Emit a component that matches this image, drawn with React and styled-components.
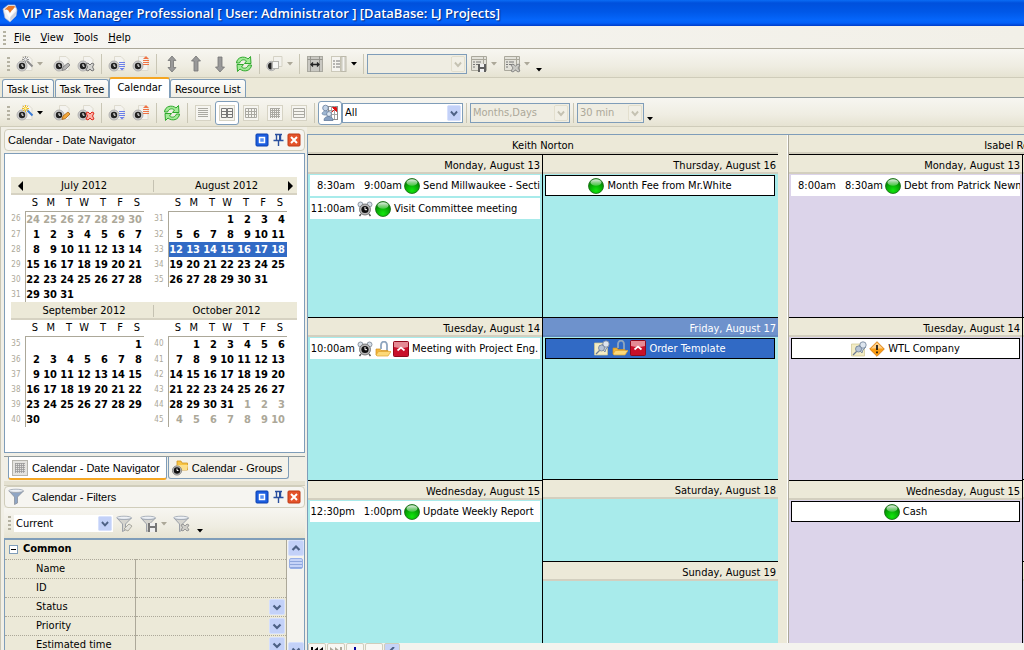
import React, { useState } from 'react';
import styled, { createGlobalStyle, css } from 'styled-components';

const GlobalStyle = createGlobalStyle`
  * { box-sizing: border-box; }

  body {
    margin: 0;
    background: #ece9d8;
    color: #000;
    font-family: "DejaVu Sans Condensed", "Noto Sans", sans-serif;
    font-size: 11px;
    line-height: 14px;
  }

  button, select, input { font: inherit; color: inherit; }
  svg { display: block; flex: none; }
`;

const Window = styled.div`
  display: flex;
  flex-direction: column;
  height: 100vh;
  overflow: hidden;
`;

const TitleBar = styled.header`
  display: flex;
  flex: none;
  align-items: center;
  gap: 4px;
  height: 26px;
  padding: 0 2px;
  background: linear-gradient(#0a6cf5 0, #0050dc 3px, #0058e8 12px, #0566fb 20px, #0360f8 23px, #003cc8 26px);
`;

const Title = styled.h1`
  margin: 0;
  color: #fff;
  font-family: "Open Sans", "Noto Sans", sans-serif;
  font-size: 13px;
  font-weight: 600;
  line-height: 18px;
  white-space: nowrap;
  text-shadow: 1px 1px 1px #0a2a80;
`;

const MenuBar = styled.nav`
  display: flex;
  flex: none;
  align-items: center;
  height: 23px;
  padding: 2px 0 0 1px;
  background: linear-gradient(90deg, #f6f5f1, #f2f0e8);
  border-bottom: 1px solid #aca899;
`;

const MenuItem = styled.button`
  padding: 0 5px;
  border: 0;
  background: none;
`;

const Toolbar = styled.div`
  display: flex;
  flex: none;
  align-items: center;
  height: 29px;
  padding: 2px 0 0 5px;
  background: linear-gradient(#f7f6f1, #efede2 60%, #e6e3d2);
  border-bottom: 1px solid #cfccba;
`;

const Handle = styled.span`
  flex: none;
  width: 3px;
  height: 15px;
  margin: 0 3px 0 2px;
  background: repeating-linear-gradient(#b5b2a2 0 2px, transparent 2px 4px);
`;

const ToolButton = styled.button`
  display: flex;
  flex: none;
  align-items: center;
  justify-content: center;
  width: 24px;
  height: 24px;
  padding: 0;
  border: 1px solid transparent;
  border-radius: 3px;
  background: none;

  ${(p) => p.$active && css`
    border-color: #7f9db9;
    background: #fff;
  `}
`;

const DropButton = styled.button`
  display: flex;
  flex: none;
  justify-content: center;
  align-items: center;
  width: 12px;
  height: 20px;
  margin: 0 ${(p) => p.$gap || 0}px 0 -3px;
  padding: 0;
  border: 0;
  background: none;
  color: ${(p) => (p.$dim ? '#aca899' : '#000')};
`;

const MoreButton = styled(DropButton)`
  align-self: flex-end;
  height: 14px;
  margin: 0;
`;

const Separator = styled.span`
  flex: none;
  width: 1px;
  height: 20px;
  margin: 0 3px;
  background: #c9c6b5;
`;

const ComboFrame = styled.div`
  position: relative;
  flex: none;
  width: ${(p) => p.$width}px;
  height: ${(p) => (p.$plain ? 17 : 20)}px;
  border: ${(p) => (p.$plain ? 0 : '1px solid #7f9db9')};
  background: ${(p) => (p.$off ? '#efede2' : '#fff')};

  svg {
    position: absolute;
    top: 1px;
    right: 1px;
    pointer-events: none;
  }
`;

const ComboSelect = styled.select`
  width: 100%;
  height: 100%;
  padding: 0 2px;
  border: 0;
  background: none;
  color: ${(p) => (p.disabled ? '#aca899' : '#000')};
  opacity: 1;
  appearance: none;
`;

const TabStrip = styled.div`
  display: flex;
  flex: none;
  align-items: flex-end;
  height: 20px;
  padding-left: 2px;
  border-bottom: 1px solid #919b9c;
`;

const Tab = styled.button`
  height: 18px;
  margin-right: 1px;
  padding: 2px 4px 0;
  border: 1px solid #7f9db9;
  border-bottom: 0;
  border-radius: 3px 3px 0 0;
  background: linear-gradient(#fdfdfb, #f0eee6);
  white-space: nowrap;

  ${(p) => p.$active && css`
    height: 21px;
    margin: 0 0 -1px -1px;
    padding: 0 7px 2px;
    border-top: 2px solid #f5a623;
    background: #fff;
  `}
`;

const Body = styled.div`
  display: flex;
  flex: 1;
  min-height: 0;
`;

const Sidebar = styled.aside`
  display: flex;
  flex: 0 0 307px;
  flex-direction: column;
  padding: 2px 2px 0 3px;
  overflow: hidden;
  background: #f1efe6;
  border-left: 1px solid #c9c6b5;
`;

const PanelHeader = styled.div`
  display: flex;
  flex: none;
  align-items: center;
  gap: 2px;
  height: 22px;
  padding: 0 3px;
  border: 1px solid #d0cdbb;
  border-radius: 4px;
  background: #f6f5f1;
`;

const PanelTitle = styled.h2`
  flex: 1;
  margin: 0;
  padding-left: ${(p) => (p.$icon ? 4 : 0)}px;
  font-family: "Liberation Sans", Arial, sans-serif;
  font-size: 11px;
  font-weight: 400;
`;

const PanelButton = styled.button`
  width: 14px;
  height: 14px;
  padding: 0;
  border: 0;
  background: none;
`;

const Navigator = styled.div`
  display: grid;
  flex: none;
  grid-template-columns: 1fr 1fr;
  height: 300px;
  margin-top: 2px;
  padding: 23px 7px 0 6px;
  align-content: start;
  border: 1px solid #7f9db9;
  background: #fff;
`;

const Month = styled.section`
  height: 125px;
`;

const MonthHeader = styled.div`
  display: flex;
  align-items: center;
  height: 18px;
  padding: 1px 2px 0 4px;
  background: #ece9d8;
  border-bottom: 2px solid #d6d2c2;
`;

const MonthName = styled.span`
  flex: 1;
  text-align: center;
`;

const MonthArrow = styled.button`
  width: 10px;
  margin: ${(p) => (p.$next ? '0 0 0 -10px' : '0 -10px 0 0')};
  padding: 0;
  border: 0;
  background: none;
`;

const MonthDivider = styled.span`
  width: 1px;
  height: 12px;
  margin-right: -2px;
  background: #c5c2b2;
`;

const MonthTable = styled.table`
  border-collapse: collapse;
  table-layout: fixed;
  width: 133px;

  th, td {
    width: 17px;
    height: 15px;
    padding: 1px 2px 0 0;
    line-height: 14px;
    text-align: right;
  }

  th:first-child {
    width: 14px;
    padding-right: 4px;
    border: 0;
    color: #aca899;
    font-size: 8px;
    font-weight: 400;
  }

  thead th {
    height: 16px;
    padding-right: 4px;
    font-weight: 400;
    border-bottom: 1px solid #aca899;
  }

  td:nth-child(2) { border-left: 1px solid #aca899; }
`;

const Day = styled.td`
  background: ${(p) => (p.$selected ? '#316ac5' : 'transparent')};
  color: ${(p) => (p.$selected ? '#fff' : p.$outside ? '#aca899' : '#000')};
  font-weight: 700;
`;

const DockTabs = styled.div`
  display: flex;
  flex: none;
  gap: 1px;
  height: 24px;
  margin-top: 3px;
  padding-left: 4px;
  border-top: 1px solid #919b9c;
`;

const DockTab = styled.button`
  display: flex;
  align-items: center;
  gap: 4px;
  height: ${(p) => (p.$active ? 23 : 22)}px;
  padding: 0 6px 0 3px;
  border: 1px solid #7f9db9;
  border-top: 0;
  border-radius: 0 0 3px 3px;
  background: ${(p) => (p.$active ? '#fff' : '#f4f2ea')};
  font-family: "Liberation Sans", Arial, sans-serif;
  white-space: nowrap;
  ${(p) => p.$active && 'border-bottom: 2px solid #f5a623;'}
`;

const Splitter = styled.div`
  flex: none;
  height: 5px;
  margin: 1px 0 0;
  border: 1px solid #d0cdbb;
  border-width: 0 0 1px;
  background: #e4e1d1;
`;

const FilterBar = styled(Toolbar)`
  height: 30px;
  padding: 1px 0 0 2px;
  border-bottom: 0;
`;

const FilterGrid = styled.div`
  display: flex;
  flex: 1;
  min-height: 0;
  overflow: hidden;
  border: 1px solid #7f9db9;
  border-width: 2px 1px 0;
`;

const PropertyTable = styled.table`
  flex: 1;
  align-self: flex-start;
  border-collapse: collapse;
  background: #ece9d8;
  border-right: 1px solid #aca899;

  th, td {
    height: 19px;
    padding: 0;
    border-bottom: 1px dotted #aca899;
    font-weight: 400;
    text-align: left;
  }

  tbody th { width: 130px; padding-left: 31px; }
  tbody td { border-left: 1px solid #aca899; padding-right: 1px; }
`;

const GroupCell = styled.div`
  display: flex;
  align-items: center;
  gap: 5px;
  padding-left: 4px;
  font-weight: 700;
`;

const ExpandButton = styled.button`
  width: 9px;
  height: 9px;
  padding: 0;
  border: 0;
`;

const RowDrop = styled.button`
  display: block;
  margin-left: auto;
  padding: 0;
  border: 0;
  background: none;
`;

const ScrollTrack = styled.div`
  display: flex;
  flex: none;
  flex-direction: column;
  justify-content: space-between;
  align-items: center;
  width: 17px;
  background: #f4f3ee;
`;

const ScrollThumb = styled.div`
  width: 14px;
  height: 11px;
  margin: 2px auto 0;
  border: 1px solid #98b0e8;
  border-radius: 2px;
  background: repeating-linear-gradient(#c6d3f7 0 2px, #8fa6dc 2px 3px);
`;

const Schedule = styled.main`
  display: flex;
  flex: 1;
  flex-direction: column;
  min-width: 0;
  margin-top: 7px;
  overflow: hidden;
  border: 1px solid #7f9db9;
  border-width: 1px 0 0 1px;
`;

const Resources = styled.div`
  display: grid;
  flex: 1;
  grid-template-columns: minmax(470px, 1fr) 11px minmax(468px, 1fr);
  min-height: 0;
`;

const ResourceDivider = styled.div`
  border-right: 1px solid #aca899;
  background: #ece9d8;
  box-shadow: inset -1px 0 #fff;
`;

const Resource = styled.section`
  display: flex;
  flex-direction: column;
  min-height: 0;
`;

const ResourceName = styled.h2`
  flex: none;
  height: 19px;
  margin: 0;
  background: #ece9d8;
  border-bottom: 2px solid #d3cfbf;
  font-size: 11px;
  font-weight: 400;
  line-height: 21px;
  text-align: center;
`;

const DayColumns = styled.div`
  display: grid;
  flex: 1;
  grid-template-columns: 1fr 1fr;
  min-height: 0;
  background: ${(p) => p.$tint};
`;

const DayCell = styled.div`
  flex: ${(p) => (p.$half ? 1 : 2)} 1 0;
  min-height: 0;
  overflow: hidden;
  border-top: 1px solid #000;
`;

const DayTitle = styled.h3`
  height: 19px;
  margin: 0;
  padding-right: 2px;
  background: ${(p) => (p.$today ? '#6e92cc' : '#ece9d8')};
  border-bottom: 2px solid ${(p) => (p.$today ? '#6488c0' : '#d3cfbf')};
  color: ${(p) => (p.$today ? '#fff' : '#000')};
  font-size: 11px;
  font-weight: 400;
  line-height: 22px;
  text-align: right;
`;

const Events = styled.div`
  display: flex;
  flex-direction: column;
  gap: 2px;
  padding: 1px 2px;
`;

const DayColumn = styled.div`
  display: flex;
  flex-direction: column;
  min-width: 0;

  &:first-child { border-right: 1px solid #000; }
  &:last-child ${Events} { padding-right: 3px; }
`;

const Event = styled.div`
  display: flex;
  align-items: center;
  gap: 2px;
  height: 21px;
  overflow: hidden;
  background: #fff;
  white-space: nowrap;

  ${(p) => p.$allDay && css`
    justify-content: center;
    border: 1px solid #000;
  `}

  ${(p) => p.$selected && css`
    background: #316ac5;
    color: #fff;
  `}
`;

const Time = styled.time`
  flex: none;
  width: 45px;
  padding-top: 1px;
  text-align: right;
`;

const EventText = styled.span`
  padding: 1px 0 0 1px;
  overflow: hidden;
`;

const RecordBar = styled.div`
  display: flex;
  flex: none;
  align-items: flex-start;
  gap: 1px;
  height: 7px;
  overflow: hidden;
  background: #f4f3ee;
`;

const RecordButton = styled.button`
  display: flex;
  justify-content: center;
  width: ${(p) => p.$width || 18}px;
  height: 17px;
  padding: 3px 0 0;
  border: 1px solid #d0cdbb;
  border-radius: 2px;
  background: ${(p) => (p.$blue ? '#c6d3f7' : '#f8f7f3')};
`;

/* icons */

const Triangle = () => (
  <svg width="6" height="4" viewBox="0 0 6 4"><path d="M0 0h6L3 3.5z" fill="currentColor" /></svg>
);

const ChevronBox = ({ off, up, size = 16, height = 16 }) => (
  <svg width={size} height={height} viewBox={`0 0 16 ${height < 10 ? height : 16}`} preserveAspectRatio={height < 10 ? 'xMinYMin' : 'none'}>
    <rect x=".5" y=".5" width="15" height="15" rx="1.5" fill={off ? '#f1efe5' : '#c3d1f8'} stroke={off ? '#e0ddcb' : '#d6e0fc'} />
    <path d={up ? 'M4.5 10 8 6.500l3.500 3.500' : 'M4.500 6.500 8 10l3.500-3.500'} fill="none" stroke={off ? '#c5c2b2' : '#4d6185'} strokeWidth="2.200" />
  </svg>
);

const AppLogo = () => (
  <svg width="16" height="20" viewBox="0 0 16 20">
    <path d="M1 6 6 2l7 0 2 5-1 6-6 6-5-4z" fill="#f1f1f4" stroke="#a9b4cf" strokeWidth=".7" />
    <path d="m2.500 6.500 4-3.500h6l1.500 3-4 1-2 3-2-3z" fill="#e8792a" />
    <path d="m4 7 3.500 6L13.500 5" fill="none" stroke="#fff" strokeWidth="2.200" />
    <path d="m8 18 5.500-5 1-5-6 6z" fill="#cfd3de" />
  </svg>
);

const badges = {
  wand: (c) => <g><path d="m11 6 5.500 5.500" stroke={c ? '#3a7bd5' : '#8d8d8d'} strokeWidth="2" /><path d="M9.500 1v7M6 4.500h7M7 2l5 5M12 2 7 7" stroke={c ? '#f2b705' : '#8d8d8d'} strokeWidth=".9" /><circle cx="9.500" cy="4.500" r="1.200" fill={c ? '#fff3a0' : '#eee'} /></g>,
  pencil: (c) => <path d="m9 15.500 1-3.500 5-4 2 2-4.500 4.500z" fill={c ? '#f3a73a' : '#b5b5b5'} stroke={c ? '#a86514' : '#777'} strokeWidth=".8" />,
  cross: (c) => <path d="m9 9 2-1 2 2 2-2 2 1-1.500 3 1.500 3-2 1-2-2-2 2-2-1 1.500-3z" fill={c ? '#fbb3a8' : '#d4d4d0'} stroke={c ? '#e0281b' : '#777'} strokeWidth="1" />,
  lines: () => <g><path d="M11 7.500h6M11 9.500h6M11 11.500h6" stroke="#6b7fe8" /><path d="M11.500 13h5L14 15.500z" fill="#6b7fe8" /></g>,
  up: () => <g><path d="M11 4h6L14 1z" fill="#ef7446" /><path d="M11 5.500h6M11 7.500h6M11 9.500h6" stroke="#ef7446" /></g>,
};

const ClockIcon = ({ badge, color }) => (
  <svg width="18" height="18" viewBox="0 0 18 18">
    <path d="M6.500 1.500H13l3 3v11H6.500z" fill="#f4f3ef" stroke="#dedbcf" />
    <circle cx="6" cy="11" r="5" fill="#cfcfcf" stroke="#a5a5a5" strokeWidth=".8" />
    <circle cx="6" cy="11" r="3.200" fill="#222" />
    <path d="M6 9v2.200h1.600" fill="none" stroke="#fff" />
    {badges[badge](color)}
  </svg>
);

const arrowShapes = {
  both: 'M9 1 13 5.500h-2.500v7H13L9 17l-4-4.500h2.500v-7H5z',
  up: 'M9 1 13.500 6H11v10H7V6H4.500z',
  down: 'M9 17 4.500 12H7V2h4v10h2.500z',
};

const ArrowIcon = ({ dir }) => (
  <svg width="18" height="18" viewBox="0 0 18 18"><path d={arrowShapes[dir]} fill="#999" stroke="#757575" strokeWidth=".8" /></svg>
);

const RefreshIcon = () => (
  <svg width="18" height="18" viewBox="0 0 18 18">
    <path d="M1.500 8C2 2 9 .5 13 4l2.500-2.500.5 7H9.500L11.500 6C9 4 6 4.500 4.500 8z" fill="#a4ea98" stroke="#2fa82c" strokeWidth="1" />
    <path d="M16.500 10c-.5 6-7.500 7.500-11.500 4l-2.500 2.500-.5-7h6.500L6.500 12c2.500 2 5.500 1.500 7-2z" fill="#a4ea98" stroke="#2fa82c" strokeWidth="1" />
  </svg>
);

const ClockPageIcon = () => (
  <svg width="18" height="18" viewBox="0 0 18 18">
    <circle cx="5.500" cy="11" r="4.700" fill="#ccc" stroke="#aaa" strokeWidth=".8" />
    <path d="M5.500 7.500a3.500 3.500 0 0 0 0 7z" fill="#222" />
    <path d="M7.500 1.500H16v10H7.500z" fill="#f2f1ec" stroke="#d5d2c5" />
    <rect x="6.500" y="6.500" width="6" height="7" fill="#f7f7f5" stroke="#b5b5b0" />
  </svg>
);

const FitWidthIcon = () => (
  <svg width="18" height="18" viewBox="0 0 18 18">
    <rect x="1.500" y="1.500" width="15" height="15" fill="#c9c8c2" stroke="#aaa9a0" />
    <path d="M1.500 4.500h15M4.500 1v16M13.500 1v16" stroke="#96958e" />
    <path d="M5 9.500h8M7 7.500l-2 2 2 2M11 7.500l2 2-2 2" fill="none" stroke="#222" strokeWidth="1.300" />
  </svg>
);

const ColumnsIcon = () => (
  <svg width="18" height="18" viewBox="0 0 18 18">
    <rect x="1.500" y="1.500" width="9" height="15" fill="#f5f4f0" stroke="#ccc9ba" />
    <path d="M3 6h2M6 6h4M3 9h2M6 9h4M3 12h2M6 12h4" stroke="#777" />
    <rect x="11" y="1.500" width="5" height="15" fill="#dddcd4" stroke="#bcb9aa" />
    <path d="M13.500 2v14" stroke="#f5f4f0" />
  </svg>
);

const LayoutIcon = ({ remove }) => (
  <svg width="18" height="18" viewBox="0 0 18 18">
    <path d="M1.500 1.500h15v14h-15zM1.500 4.500h15M13.500 2v12" fill="#e3e2da" stroke="#aaa89c" />
    <path d="M3 7h2M6 7h5M3 9.500h2M6 9.500h5M3 12h2" stroke="#777" />
    {remove
      ? <path d="m8 10 2-1 2.500 2L15 9l2 1-2 3 2 3-2 1-2.500-2-2.500 2-2-1 2-3z" fill="#c9c9c4" stroke="#777" strokeWidth=".8" />
      : <g><path d="M8 9h8v8H8z" fill="#5e5e5e" /><path d="M10 9h4v3h-4zM10 14h4v3h-4z" fill="#eee" /></g>}
  </svg>
);

const viewLines = {
  day: 'M3 3.500h10M3 5.500h10M3 7.500h10M3 9.500h10M3 11.500h10',
  work: 'M2.500 3.500h5v9h-5zM8.500 3.500h5v9h-5zM2.500 6.500h5M8.500 6.500h5M2.500 9.500h5M8.500 9.500h5',
  week: 'M2.500 3.500h11v9h-11zM2.500 6.500h11M2.500 9.500h11M5.500 3.500v9M8.500 3.500v9M11.500 3.500v9',
  month: 'M3 3.500h10M3 5.500h10M3 7.500h10M3 9.500h10M3 11.500h10M3.500 3v10M5.500 3v10M7.500 3v10M9.500 3v10M11.500 3v10',
  year: 'M2.500 3.500h11v9h-11zM2.500 6.500h11M2.500 9.500h11',
};

const ViewIcon = ({ kind, dark }) => (
  <svg width="16" height="16" viewBox="0 0 16 16">
    <rect x=".5" y=".5" width="15" height="15" fill="#f6f5f0" stroke="#d6d3c4" />
    <path d={viewLines[kind]} fill="none" stroke={dark ? '#777' : '#aaa9a2'} />
  </svg>
);

const ResourceIcon = () => (
  <svg width="18" height="18" viewBox="0 0 18 18">
    <rect x="7.500" y="2.500" width="9" height="13" fill="#fff" stroke="#8d8d8d" />
    <path d="M10.500 2v13M13.500 2v13M8 6.500h8M8 10.500h8" stroke="#a5a5a5" />
    <path d="m11 8 3-3M11.500 3.500h4v4z" fill="#e01010" stroke="#e01010" />
    <circle cx="4.500" cy="4" r="2.800" fill="#c3d3e6" stroke="#647c9c" strokeWidth=".8" />
    <path d="M1 10c0-2 2-3 4-3s3.500 1 3.500 4H3z" fill="#9fb7d2" stroke="#7088a8" strokeWidth=".7" />
    <circle cx="8" cy="10" r="2.400" fill="#dde7f2" stroke="#647c9c" strokeWidth=".8" />
    <path d="M3 16.500c0-3 2-4 4.500-4s4.500 1 4.500 4z" fill="#86a0c2" stroke="#647c9c" strokeWidth=".8" />
  </svg>
);

const FunnelIcon = ({ badge, color = '#d6d5cf' }) => (
  <svg width="18" height="18" viewBox="0 0 18 18">
    <path d="M1 3 6.500 9v7.500l3-1.500V9L15.500 3C11 5 5 5 1 3z" fill={color} stroke="#8a919c" strokeWidth=".8" />
    <ellipse cx="8" cy="2.800" rx="7.400" ry="1.600" fill="#eef1f6" stroke="#9aa3b0" strokeWidth=".8" />
    {badge === 'erase' && <path d="m8 14 5-5 3 2-4 5z" fill="#e4e3dd" stroke="#aaa99f" />}
    {badge === 'save' && <g><path d="M8 8h9v9H8z" fill="#777" /><path d="M10 8h5v3h-5zM10 13h5v4h-5z" fill="#eee" /></g>}
    {badge === 'remove' && <path d="m8 10 2-1 2 2 2-2 2 1-1.500 2.500L16 15l-2 1-2-2-2 2-2-1 1.500-2.500z" fill="#cfcec8" stroke="#888" strokeWidth=".8" />}
  </svg>
);

const MaximizeIcon = () => (
  <svg width="14" height="14" viewBox="0 0 14 14">
    <rect x="1" y="1" width="12" height="12" rx="1" fill="#1c5ee0" stroke="#0a3fae" />
    <rect x="4.500" y="4.500" width="5" height="5" fill="#5b93f5" stroke="#fff" strokeWidth="1.500" />
  </svg>
);

const PinIcon = () => (
  <svg width="14" height="14" viewBox="0 0 14 14">
    <path d="M4 1.500h7M5.500 2v5M9.500 2v5M2.500 7.500h10M7.500 8v5" fill="none" stroke="#2a4f9e" strokeWidth="1.400" />
    <path d="M8 2h1v5H8z" fill="#2a4f9e" />
  </svg>
);

const CloseIcon = () => (
  <svg width="14" height="14" viewBox="0 0 14 14">
    <rect x="1" y="1" width="12" height="12" rx="1" fill="#e5532a" stroke="#bd3a15" />
    <path d="m4 4 6 6M10 4l-6 6" stroke="#fff" strokeWidth="2" />
  </svg>
);

const CalendarTabIcon = () => (
  <svg width="16" height="16" viewBox="0 0 16 16">
    <rect x=".5" y=".5" width="15" height="15" fill="#e4e3df" stroke="#b5b4ad" />
    <path d={viewLines.month} fill="none" stroke="#999" strokeWidth=".8" />
  </svg>
);

const GroupTabIcon = () => (
  <svg width="16" height="16" viewBox="0 0 16 16">
    <path d="M5 3V1h4l1 2h5.500v7H5z" fill="#f8c544" stroke="#cf9420" strokeWidth=".8" />
    <path d="M5 5h11l-1 5H5z" fill="#fde08a" />
    <circle cx="5" cy="10.500" r="4.600" fill="#bbb" stroke="#777" strokeWidth=".8" />
    <circle cx="5" cy="10.500" r="3.200" fill="#111" />
    <path d="M5 8.500v2h1.500" fill="none" stroke="#fff" />
  </svg>
);

const GreenBall = () => (
  <svg width="16" height="16" viewBox="0 0 16 16">
    <defs>
      <radialGradient id="ball" cx=".5" cy=".8" r=".7">
        <stop offset="0" stopColor="#12e60e" /><stop offset=".6" stopColor="#07ac05" /><stop offset="1" stopColor="#067a06" />
      </radialGradient>
      <linearGradient id="shine" x2="0" y2="1">
        <stop offset="0" stopColor="#fff" stopOpacity=".9" /><stop offset="1" stopColor="#bdf0b8" stopOpacity=".35" />
      </linearGradient>
    </defs>
    <circle cx="8" cy="8" r="7.500" fill="url(#ball)" stroke="#156a12" strokeWidth=".8" />
    <ellipse cx="8" cy="4.500" rx="5.500" ry="3.200" fill="url(#shine)" />
  </svg>
);

const AlarmIcon = () => (
  <svg width="16" height="16" viewBox="0 0 16 16">
    <path d="m4 13-1.500 2M12 13l1.500 2" stroke="#555" strokeWidth="1.500" />
    <circle cx="3.500" cy="3.500" r="2.500" fill="#d7dfe8" stroke="#76828f" strokeWidth=".8" />
    <circle cx="12.500" cy="3.500" r="2.500" fill="#d7dfe8" stroke="#76828f" strokeWidth=".8" />
    <circle cx="8" cy="8.500" r="5.500" fill="#b5b5b5" stroke="#666" strokeWidth=".8" />
    <circle cx="8" cy="8.500" r="3.600" fill="#111" />
    <path d="M8 6v2.700h2" fill="none" stroke="#fff" />
  </svg>
);

const LockFolderIcon = () => (
  <svg width="16" height="16" viewBox="0 0 16 16">
    <path d="M6 8V4a3 3.400 0 0 1 6 0v7" fill="none" stroke="#8fa6bf" strokeWidth="1.800" />
    <path d="M1 14V8h4l1 1.500h7V14z" fill="#f3b63a" stroke="#d1901d" strokeWidth=".7" />
    <path d="m1 14 2.500-3.500H16L13 15H2z" fill="#fcd978" stroke="#dda32f" strokeWidth=".7" />
  </svg>
);

const HighIcon = () => (
  <svg width="16" height="16" viewBox="0 0 16 16">
    <rect x=".5" y=".5" width="15" height="15" rx="1" fill="#c8102a" stroke="#8f0a1c" />
    <path d="M1 1h14v5Q8 8 1 6z" fill="#e58a94" />
    <path d="m4.500 9.500 3.500-3 3.500 3" fill="none" stroke="#fff" strokeWidth="1.700" />
  </svg>
);

const PinNoteIcon = () => (
  <svg width="16" height="16" viewBox="0 0 16 16">
    <path d="M.5 3h10l3 2v10H.5z" fill="#f3ecc5" stroke="#cfc791" strokeWidth=".7" />
    <path d="m2 14 5-5" stroke="#6d7c92" strokeWidth="1.300" />
    <path d="m5 6 3-1 3-3 4 4-3 3-1 3z" fill="#c3cfde" stroke="#6f8097" strokeWidth=".8" />
    <circle cx="12" cy="4" r="3.200" fill="#dde5ee" stroke="#6f8097" strokeWidth=".8" />
    <circle cx="7.500" cy="8" r="3" fill="#b6c4d6" stroke="#6f8097" strokeWidth=".8" />
  </svg>
);

const WarnIcon = () => (
  <svg width="16" height="16" viewBox="0 0 16 16">
    <path d="m8 .7 7.300 7.300L8 15.300.7 8z" fill="#fb9d14" stroke="#d27508" strokeWidth=".8" />
    <path d="m8 1.500 6 6H2z" fill="#fed08a" />
    <path d="M8 4v5M8 10.500v1.800" stroke="#111" strokeWidth="1.700" />
  </svg>
);

const eventIcons = {
  ball: GreenBall,
  alarm: AlarmIcon,
  lock: LockFolderIcon,
  high: HighIcon,
  note: PinNoteIcon,
  warn: WarnIcon,
};

/* data */

const months = [
  { name: 'July 2012', lead: 24, leadCount: 7, days: 31, week: 26, rows: 6, prev: true },
  { name: 'August 2012', leadCount: 3, days: 31, week: 31, rows: 5, next: true, selectedWeek: 33 },
  { name: 'September 2012', leadCount: 6, days: 30, week: 35, rows: 6 },
  { name: 'October 2012', leadCount: 1, days: 31, week: 40, rows: 6, tail: true },
];

const resources = [
  {
    name: 'Keith Norton',
    tint: '#a8ebeb',
    columns: [
      [
        {
          title: 'Monday, August 13',
          events: [
            { from: '8:30am', to: '9:00am', icons: ['ball'], text: 'Send Millwaukee - Section' },
            { from: '11:00am', icons: ['alarm', 'ball'], text: 'Visit Committee meeting' },
          ],
        },
        {
          title: 'Tuesday, August 14',
          events: [{ from: '10:00am', icons: ['alarm', 'lock', 'high'], text: 'Meeting with Project Eng.' }],
        },
        {
          title: 'Wednesday, August 15',
          events: [{ from: '12:30pm', to: '1:00pm', icons: ['ball'], text: 'Update Weekly Report' }],
        },
      ],
      [
        { title: 'Thursday, August 16', events: [{ icons: ['ball'], text: 'Month Fee from Mr.White' }] },
        {
          title: 'Friday, August 17',
          today: true,
          events: [{ icons: ['note', 'lock', 'high'], text: 'Order Template', selected: true }],
        },
        { title: 'Saturday, August 18', half: true, events: [] },
        { title: 'Sunday, August 19', half: true, events: [] },
      ],
    ],
  },
  {
    name: 'Isabel Robinson',
    tint: '#dcd4ea',
    columns: [
      [
        {
          title: 'Monday, August 13',
          events: [{ from: '8:00am', to: '8:30am', icons: ['ball'], text: 'Debt from Patrick Newman' }],
        },
        { title: 'Tuesday, August 14', events: [{ icons: ['note', 'warn'], text: 'WTL Company' }] },
        { title: 'Wednesday, August 15', events: [{ icons: ['ball'], text: 'Cash' }] },
      ],
      [
        { title: 'Thursday, August 16', events: [] },
        { title: 'Friday, August 17', events: [] },
        { title: 'Saturday, August 18', half: true, events: [] },
        { title: 'Sunday, August 19', half: true, events: [] },
      ],
    ],
  },
];

const filterRows = [
  { label: 'Name' },
  { label: 'ID' },
  { label: 'Status', drop: true },
  { label: 'Priority', drop: true },
  { label: 'Estimated time', drop: true },
];

const getDay = (month, index) => {
  const number = index - month.leadCount + 1;
  if (number < 1) return { text: month.lead ? month.lead + index : '', outside: true };
  if (number > month.days) return { text: month.tail ? number - month.days : '', outside: true };
  return { text: number };
};

function Combo({ label, value, width, disabled, plain }) {
  return (
    <ComboFrame $width={width} $off={disabled} $plain={plain}>
      <ComboSelect aria-label={label} disabled={disabled} defaultValue={value}>
        <option value={value}>{value}</option>
      </ComboSelect>
      <ChevronBox off={disabled} size={14} height={plain ? 15 : 16} />
    </ComboFrame>
  );
}

function TaskButtons({ color }) {
  return (
    <>
      <Handle />
      <ToolButton aria-label="New task"><ClockIcon badge="wand" color={color} /></ToolButton>
      <DropButton aria-label="New task options" $dim={!color} $gap={4}><Triangle /></DropButton>
      <ToolButton aria-label="Edit task"><ClockIcon badge="pencil" color={color} /></ToolButton>
      <ToolButton aria-label="Delete task"><ClockIcon badge="cross" color={color} /></ToolButton>
      <Separator />
      <ToolButton aria-label="Move down"><ClockIcon badge="lines" /></ToolButton>
      <ToolButton aria-label="Move up"><ClockIcon badge="up" /></ToolButton>
      <Separator />
    </>
  );
}

function PanelButtons() {
  return (
    <>
      <PanelButton aria-label="Maximize"><MaximizeIcon /></PanelButton>
      <PanelButton aria-label="Pin"><PinIcon /></PanelButton>
      <PanelButton aria-label="Close"><CloseIcon /></PanelButton>
    </>
  );
}

function MonthView({ month }) {
  return (
    <Month>
      <MonthHeader>
        {month.prev && (
          <MonthArrow aria-label="Previous month">
            <svg width="10" height="10" viewBox="0 0 10 10"><path d="M8 0v10L3 5z" /></svg>
          </MonthArrow>
        )}
        <MonthName>{month.name}</MonthName>
        {month.next && (
          <MonthArrow aria-label="Next month" $next>
            <svg width="10" height="10" viewBox="0 0 10 10"><path d="M3 0v10l5-5z" /></svg>
          </MonthArrow>
        )}
        {(month.prev || month.week === 35) && <MonthDivider />}
      </MonthHeader>
      <MonthTable>
        <thead>
          <tr>
            <th />
            {['S', 'M', 'T', 'W', 'T', 'F', 'S'].map((d, i) => <th key={i}>{d}</th>)}
          </tr>
        </thead>
        <tbody>
          {Array.from({ length: month.rows }, (_, row) => (
            <tr key={row}>
              <th>{month.week + row}</th>
              {Array.from({ length: 7 }, (_, col) => {
                const day = getDay(month, row * 7 + col);
                return (
                  <Day key={col} $outside={day.outside} $selected={month.selectedWeek === month.week + row}>
                    {day.text}
                  </Day>
                );
              })}
            </tr>
          ))}
        </tbody>
      </MonthTable>
    </Month>
  );
}

function EventRow({ event }) {
  return (
    <Event $allDay={!event.from} $selected={event.selected}>
      {event.from && <Time>{event.from}</Time>}
      {event.to && <Time>{event.to}</Time>}
      {event.icons.map((name) => {
        const Icon = eventIcons[name];
        return <Icon key={name} />;
      })}
      <EventText>{event.text}</EventText>
    </Event>
  );
}

function App() {
  const [tab, setTab] = useState('Calendar');
  const [view, setView] = useState('work');

  return (
    <Window>
      <GlobalStyle />
      <TitleBar>
        <AppLogo />
        <Title>VIP Task Manager Professional [ User: Administrator ] [DataBase: LJ Projects]</Title>
      </TitleBar>
      <MenuBar>
        <Handle />
        {['File', 'View', 'Tools', 'Help'].map((m) => (
          <MenuItem key={m}><u>{m[0]}</u>{m.slice(1)}</MenuItem>
        ))}
      </MenuBar>

      <Toolbar>
        <TaskButtons />
        <ToolButton aria-label="Expand"><ArrowIcon dir="both" /></ToolButton>
        <ToolButton aria-label="Up"><ArrowIcon dir="up" /></ToolButton>
        <ToolButton aria-label="Down"><ArrowIcon dir="down" /></ToolButton>
        <ToolButton aria-label="Refresh"><RefreshIcon /></ToolButton>
        <Separator />
        <ToolButton aria-label="Copy task"><ClockPageIcon /></ToolButton>
        <DropButton aria-label="Copy options" $dim><Triangle /></DropButton>
        <Separator />
        <ToolButton aria-label="Fit width"><FitWidthIcon /></ToolButton>
        <ToolButton aria-label="Columns"><ColumnsIcon /></ToolButton>
        <DropButton aria-label="Column options"><Triangle /></DropButton>
        <Separator />
        <Combo label="Layout" value="" width={100} disabled />
        <ToolButton aria-label="Save layout"><LayoutIcon /></ToolButton>
        <DropButton aria-label="Save options" $dim><Triangle /></DropButton>
        <ToolButton aria-label="Delete layout"><LayoutIcon remove /></ToolButton>
        <DropButton aria-label="Delete options" $dim><Triangle /></DropButton>
        <MoreButton aria-label="More"><Triangle /></MoreButton>
      </Toolbar>

      <TabStrip>
        {['Task List', 'Task Tree', 'Calendar', 'Resource List'].map((name) => (
          <Tab key={name} $active={tab === name} onClick={() => setTab(name)}>{name}</Tab>
        ))}
      </TabStrip>

      <Toolbar>
        <TaskButtons color />
        <ToolButton aria-label="Refresh"><RefreshIcon /></ToolButton>
        <Separator />
        {Object.keys(viewLines).map((kind) => (
          <ToolButton key={kind} aria-label={kind} $active={view === kind} onClick={() => setView(kind)}>
            <ViewIcon kind={kind} dark={view === kind} />
          </ToolButton>
        ))}
        <Separator />
        <ToolButton aria-label="Resources" $active><ResourceIcon /></ToolButton>
        <Combo label="Resource filter" value="All" width={121} />
        <Separator />
        <Combo label="Scale" value="Months,Days" width={100} disabled />
        <Separator />
        <Combo label="Interval" value="30 min" width={67} disabled />
        <MoreButton aria-label="More"><Triangle /></MoreButton>
      </Toolbar>

      <Body>
        <Sidebar>
          <PanelHeader>
            <PanelTitle>Calendar - Date Navigator</PanelTitle>
            <PanelButtons />
          </PanelHeader>
          <Navigator>
            {months.map((m) => <MonthView key={m.name} month={m} />)}
          </Navigator>
          <DockTabs>
            <DockTab $active><CalendarTabIcon />Calendar - Date Navigator</DockTab>
            <DockTab><GroupTabIcon />Calendar - Groups</DockTab>
          </DockTabs>
          <Splitter />
          <PanelHeader>
            <FunnelIcon color="#8fa5c4" />
            <PanelTitle $icon>Calendar - Filters</PanelTitle>
            <PanelButtons />
          </PanelHeader>
          <FilterBar>
            <Handle />
            <Combo label="Filter" value="Current" width={99} plain />
            <ToolButton aria-label="Clear filter"><FunnelIcon badge="erase" /></ToolButton>
            <ToolButton aria-label="Save filter"><FunnelIcon badge="save" /></ToolButton>
            <DropButton aria-label="Save filter options" $dim><Triangle /></DropButton>
            <ToolButton aria-label="Delete filter"><FunnelIcon badge="remove" /></ToolButton>
            <MoreButton aria-label="More"><Triangle /></MoreButton>
          </FilterBar>
          <FilterGrid>
            <PropertyTable>
              <thead>
                <tr>
                  <th colSpan={2}>
                    <GroupCell>
                      <ExpandButton aria-label="Collapse">
                        <svg width="9" height="9" viewBox="0 0 9 9">
                          <rect x=".5" y=".5" width="8" height="8" fill="#fff" stroke="#7f9db9" />
                          <path d="M2 4.500h5" stroke="#000" />
                        </svg>
                      </ExpandButton>
                      Common
                    </GroupCell>
                  </th>
                </tr>
              </thead>
              <tbody>
                {filterRows.map((row) => (
                  <tr key={row.label}>
                    <th>{row.label}</th>
                    <td>{row.drop && <RowDrop aria-label={row.label}><ChevronBox /></RowDrop>}</td>
                  </tr>
                ))}
              </tbody>
            </PropertyTable>
            <ScrollTrack>
              <div>
                <ChevronBox up />
                <ScrollThumb />
              </div>
              <ChevronBox height={8} />
            </ScrollTrack>
          </FilterGrid>
        </Sidebar>

        <Schedule>
          <Resources>
            {resources.map((res, i) => (
              <React.Fragment key={res.name}>
                {i > 0 && <ResourceDivider />}
                <Resource>
                  <ResourceName>{res.name}</ResourceName>
                  <DayColumns $tint={res.tint}>
                    {res.columns.map((column, c) => (
                      <DayColumn key={c}>
                        {column.map((day) => (
                          <DayCell key={day.title} $half={day.half}>
                            <DayTitle $today={day.today}>{day.title}</DayTitle>
                            <Events>
                              {day.events.map((event) => <EventRow key={event.text} event={event} />)}
                            </Events>
                          </DayCell>
                        ))}
                      </DayColumn>
                    ))}
                  </DayColumns>
                </Resource>
              </React.Fragment>
            ))}
          </Resources>
          <RecordBar>
            <RecordButton aria-label="First">
              <svg width="12" height="8" viewBox="0 0 12 8"><path d="M0 0h2v8H0zM7 0v8L2 4zM12 0v8L7 4z" /></svg>
            </RecordButton>
            <RecordButton aria-label="Last">
              <svg width="12" height="8" viewBox="0 0 12 8"><path d="M12 0h-2v8h2zM5 0v8l5-4zM0 0v8l5-4z" fill="#aca899" /></svg>
            </RecordButton>
            <RecordButton aria-label="Add">
              <svg width="8" height="8" viewBox="0 0 8 8"><path d="M4 0v8M0 4h8" stroke="#00009c" strokeWidth="2" /></svg>
            </RecordButton>
            <RecordButton aria-label="Remove">
              <svg width="8" height="8" viewBox="0 0 8 8"><path d="M0 4h8" stroke="#00009c" strokeWidth="2" /></svg>
            </RecordButton>
            <RecordButton aria-label="Scroll left" $width={16} $blue>
              <svg width="8" height="8" viewBox="0 0 8 8"><path d="M6 0 2 4l4 4" fill="none" stroke="#4d6185" strokeWidth="2" /></svg>
            </RecordButton>
          </RecordBar>
        </Schedule>
      </Body>
    </Window>
  );
}

export default App;
